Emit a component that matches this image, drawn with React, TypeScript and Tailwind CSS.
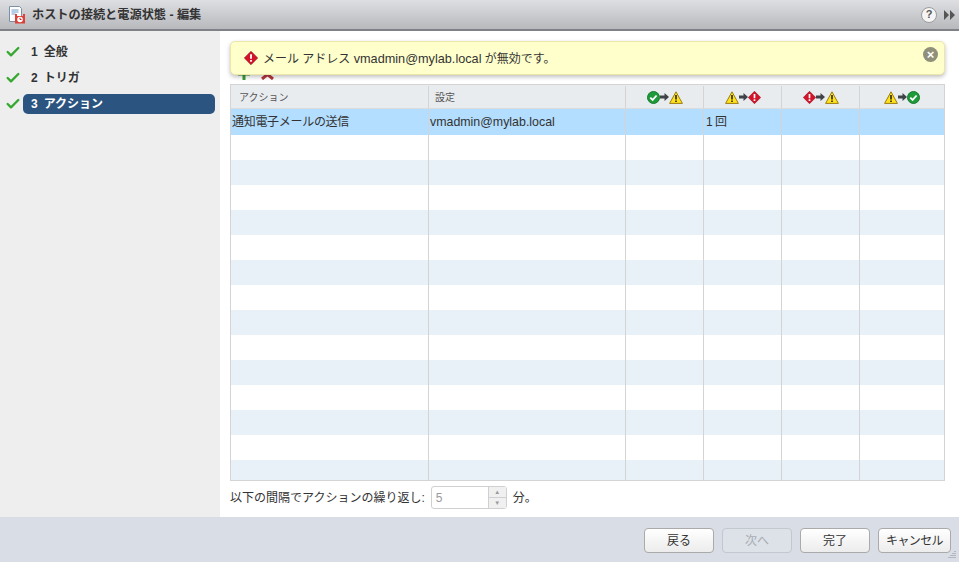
import { Check } from "lucide-react"

const font = "font-['Liberation_Sans','Noto_Sans_CJK_JP',sans-serif]"

function Ok() {
  return (
    <svg width="13" height="13" viewBox="0 0 13 13" aria-hidden="true">
      <circle cx="6.5" cy="6.5" r="6" fill="#1f9a3a" stroke="#167a2c" />
      <path d="M3.3 6.6l2.3 2.3 4-4.400" fill="none" stroke="#fff" strokeWidth="1.800" />
    </svg>
  )
}

function Warn() {
  return (
    <svg width="14" height="13" viewBox="0 0 14 13" aria-hidden="true">
      <path d="M7 .8L13.4 12.4H.6z" fill="#ffe21a" stroke="#9c7c12" strokeLinejoin="round" />
      <path d="M7 4v4.500M7 9.600v1.500" stroke="#222" strokeWidth="1.600" />
    </svg>
  )
}

function Err({ size = 13 }: { size?: number }) {
  return (
    <svg width={size} height={size} viewBox="0 0 13 13" aria-hidden="true">
      <path d="M6.5 .3L12.7 6.5 6.5 12.7 .3 6.5z" fill="#d4122a" stroke="#8e0f1d" strokeWidth=".6" />
      <path d="M6.5 3v4.200M6.500 8.300v1.600" stroke="#fff" strokeWidth="1.700" />
    </svg>
  )
}

function Arrow() {
  return (
    <svg width="9" height="8" viewBox="0 0 9 8" aria-hidden="true">
      <path d="M0 2.500h4.500V0L9 4 4.500 8V5.500H0z" fill="#3f4347" />
    </svg>
  )
}

function Transition({ from, to }: { from: React.ReactNode; to: React.ReactNode }) {
  return (
    <div className="flex items-center justify-center">
      {from}
      <Arrow />
      {to}
    </div>
  )
}

const steps = [
  { n: 1, label: "全般" },
  { n: 2, label: "トリガ" },
  { n: 3, label: "アクション", active: true },
]

function Sidebar() {
  return (
    <aside className="w-[220px] shrink-0 bg-[#eeeeee] pl-[5px] pt-[11px]">
      {steps.map((s) => (
        <div key={s.n} className="mb-[6px] flex h-5 items-center">
          <Check className="w-4 h-4 text-[#35a82f] shrink-0" strokeWidth={3.5} />
          <div
            className={
              "ml-[2px] flex h-5 w-[192px] items-center gap-[6px] rounded-[5px] pl-2 text-xs font-bold " +
              (s.active ? "bg-[#2b5580] text-white" : "text-[#333]")
            }
          >
            <span>{s.n}</span>
            <span>{s.label}</span>
          </div>
        </div>
      ))}
    </aside>
  )
}

const rows = Array.from({ length: 14 })

function ActionTable() {
  return (
    <div className="h-[397px] w-[715px] overflow-hidden border border-[#d4d4d4]">
      <div className="flex h-[24px] border-b border-[#dcdcdc] bg-[#e9ecef] pt-px text-[10px] text-[#555]">
        <div className="flex w-[198px] items-center border-r border-[#d4d4d4] pl-2">アクション</div>
        <div className="flex w-[197px] items-center border-r border-[#d4d4d4] pl-[6px]">設定</div>
        <div className="flex w-[78px] items-center justify-center border-r border-[#d4d4d4]">
          <Transition from={<Ok />} to={<Warn />} />
        </div>
        <div className="flex w-[78px] items-center justify-center border-r border-[#d4d4d4]">
          <Transition from={<Warn />} to={<Err />} />
        </div>
        <div className="flex w-[78px] items-center justify-center border-r border-[#d4d4d4]">
          <Transition from={<Err />} to={<Warn />} />
        </div>
        <div className="flex flex-1 items-center justify-center">
          <Transition from={<Warn />} to={<Ok />} />
        </div>
      </div>
      <div className="flex h-[26px] bg-[#b3deff] text-xs text-[#333]">
        <div className="flex w-[198px] items-center border-r border-[#d4d4d4] pl-px tracking-[-0.3px]">通知電子メールの送信</div>
        <div className="flex w-[197px] items-center border-r border-[#d4d4d4] pl-px text-[12.4px]">vmadmin@mylab.local</div>
        <div className="w-[78px] border-r border-[#d4d4d4]" />
        <div className="flex w-[78px] items-center border-r border-[#d4d4d4] pl-[2px] tracking-[-0.5px]">1 回</div>
        <div className="w-[78px] border-r border-[#d4d4d4]" />
        <div className="flex-1" />
      </div>
      {rows.map((_, i) => (
        <div key={i} className={"flex h-[25px] " + (i % 2 === 1 ? "bg-[#e8f0f8]" : "bg-white")}>
          <div className="w-[198px] border-r border-[#d4d4d4]" />
          <div className="w-[197px] border-r border-[#d4d4d4]" />
          <div className="w-[78px] border-r border-[#d4d4d4]" />
          <div className="w-[78px] border-r border-[#d4d4d4]" />
          <div className="w-[78px] border-r border-[#d4d4d4]" />
          <div className="flex-1" />
        </div>
      ))}
    </div>
  )
}

function Footer() {
  const btn =
    "flex h-[25px] items-center justify-center rounded-[4px] border border-[#aaaaaa] bg-gradient-to-b from-white to-[#ececec] text-xs text-[#333]"
  return (
    <footer className="relative flex h-[45px] items-start justify-end gap-2 bg-[#d9dee6] pr-2 pt-[11px]">
      <button className={btn + " w-[70px]"}>戻る</button>
      <button className="flex h-[25px] w-[70px] items-center justify-center rounded-[4px] border border-[#c2c8cf] bg-[#dde2e8] text-xs text-[#a8adb3]">
        次へ
      </button>
      <button className={btn + " w-[70px]"}>完了</button>
      <button className={btn + " w-[73px] tracking-[-0.6px]"}>キャンセル</button>
      <svg className="absolute bottom-[2px] right-[2px]" width="10" height="10" viewBox="0 0 10 10" aria-hidden="true">
        <path d="M8 1v1M6 3v1M8 3v1M4 5v1M6 5v1M8 5v1M2 7v1M4 7v1M6 7v1M8 7v1" stroke="#8b8f94" />
      </svg>
    </footer>
  )
}

export default function App() {
  return (
    <div className={"flex h-[562px] w-[959px] flex-col overflow-hidden bg-white " + font}>
      <header className="flex h-[31px] shrink-0 items-center border-b-2 border-[#7e8287] bg-gradient-to-b from-[#dedfe2] to-[#b7b9bd] pl-[9px] pr-[4px]">
        <svg width="17" height="18" viewBox="0 0 17 18" aria-hidden="true">
          <path d="M.5.5h10l2 2v13H.5z" fill="#fff" stroke="#7b8fa8" />
          <path d="M2.500 4h7M2.500 6h7M2.500 8h4" stroke="#6f9bc9" />
          <path d="M6 8h2v2H6zM14 8h2v2h-2zM6 10h10v7.500H6z" fill="#dc4038" />
          <circle cx="11" cy="13.500" r="2.800" fill="#fff" />
          <path d="M11 11.800v1.700h1.500" fill="none" stroke="#b52a22" />
        </svg>
        <h1 className="ml-[6px] pt-[2px] text-[12.2px] font-bold text-[#333]">ホストの接続と電源状態 - 編集</h1>
        <div className="ml-auto flex items-center gap-[7px]">
          <span className="flex h-4 w-4 items-center justify-center rounded-full border border-[#9b9b9b] bg-[#f5f5f5] text-[11px] font-bold text-[#555]">?</span>
          <svg width="11" height="10" viewBox="0 0 11 10" aria-hidden="true">
            <path d="M0 0l5 5-5 5zM6 0l5 5-5 5z" fill="#555" />
          </svg>
        </div>
      </header>
      <div className="flex min-h-0 flex-1">
        <Sidebar />
        <main className="relative flex-1 pl-[10px] pt-[38px]">
          {/* banner lies over the toolbar */}
          <div className="absolute left-[10px] top-[10px] z-10 flex h-[34px] w-[715px] items-center rounded-[5px] border border-[#ece7a8] bg-[#ffffcc] pl-[13px] text-xs text-[#333] shadow-[0_2px_4px_rgba(0,0,0,0.25)]">
            <Err size={14} />
            <span className="ml-[5px] pt-[2px]">
              メール アドレス <span className="text-[12.7px]">vmadmin@mylab.local</span> が無効です。
            </span>
            <span className="absolute right-[6px] top-[5px] flex h-[15px] w-[15px] items-center justify-center rounded-full bg-[#8f8f7a] text-[13px] font-bold leading-none text-white">×</span>
          </div>
          <div className="flex h-[15px] items-start gap-[11px] pl-2">
            <svg width="12" height="11" viewBox="0 0 12 11" aria-hidden="true">
              <path d="M4.500 0h3v11h-3zM0 3.500h12v3H0z" fill="#3d9a35" />
            </svg>
            <svg width="13" height="11" viewBox="0 0 13 11" aria-hidden="true">
              <path d="M1 1l11 9M12 1L1 10" stroke="#b5373c" strokeWidth="3" />
            </svg>
          </div>
          <ActionTable />
          <div className="mt-[5px] flex items-center text-xs text-[#333]">
            <span>以下の間隔でアクションの繰り返し:</span>
            <div className="ml-[6px] flex h-[23px] w-[76px] rounded-[3px] border border-[#d0d0d0] bg-white">
              <span className="flex flex-1 items-center pl-1 text-[#9a9a9a]">5</span>
              <div className="flex w-[18px] flex-col border-l border-[#d0d0d0] bg-[#f0f0f0]">
                <span className="flex flex-1 items-center justify-center border-b border-[#d0d0d0] text-[6px] leading-none text-[#999]">▲</span>
                <span className="flex flex-1 items-center justify-center text-[6px] leading-none text-[#999]">▼</span>
              </div>
            </div>
            <span className="ml-[6px]">分。</span>
          </div>
        </main>
      </div>
      <Footer />
    </div>
  )
}
